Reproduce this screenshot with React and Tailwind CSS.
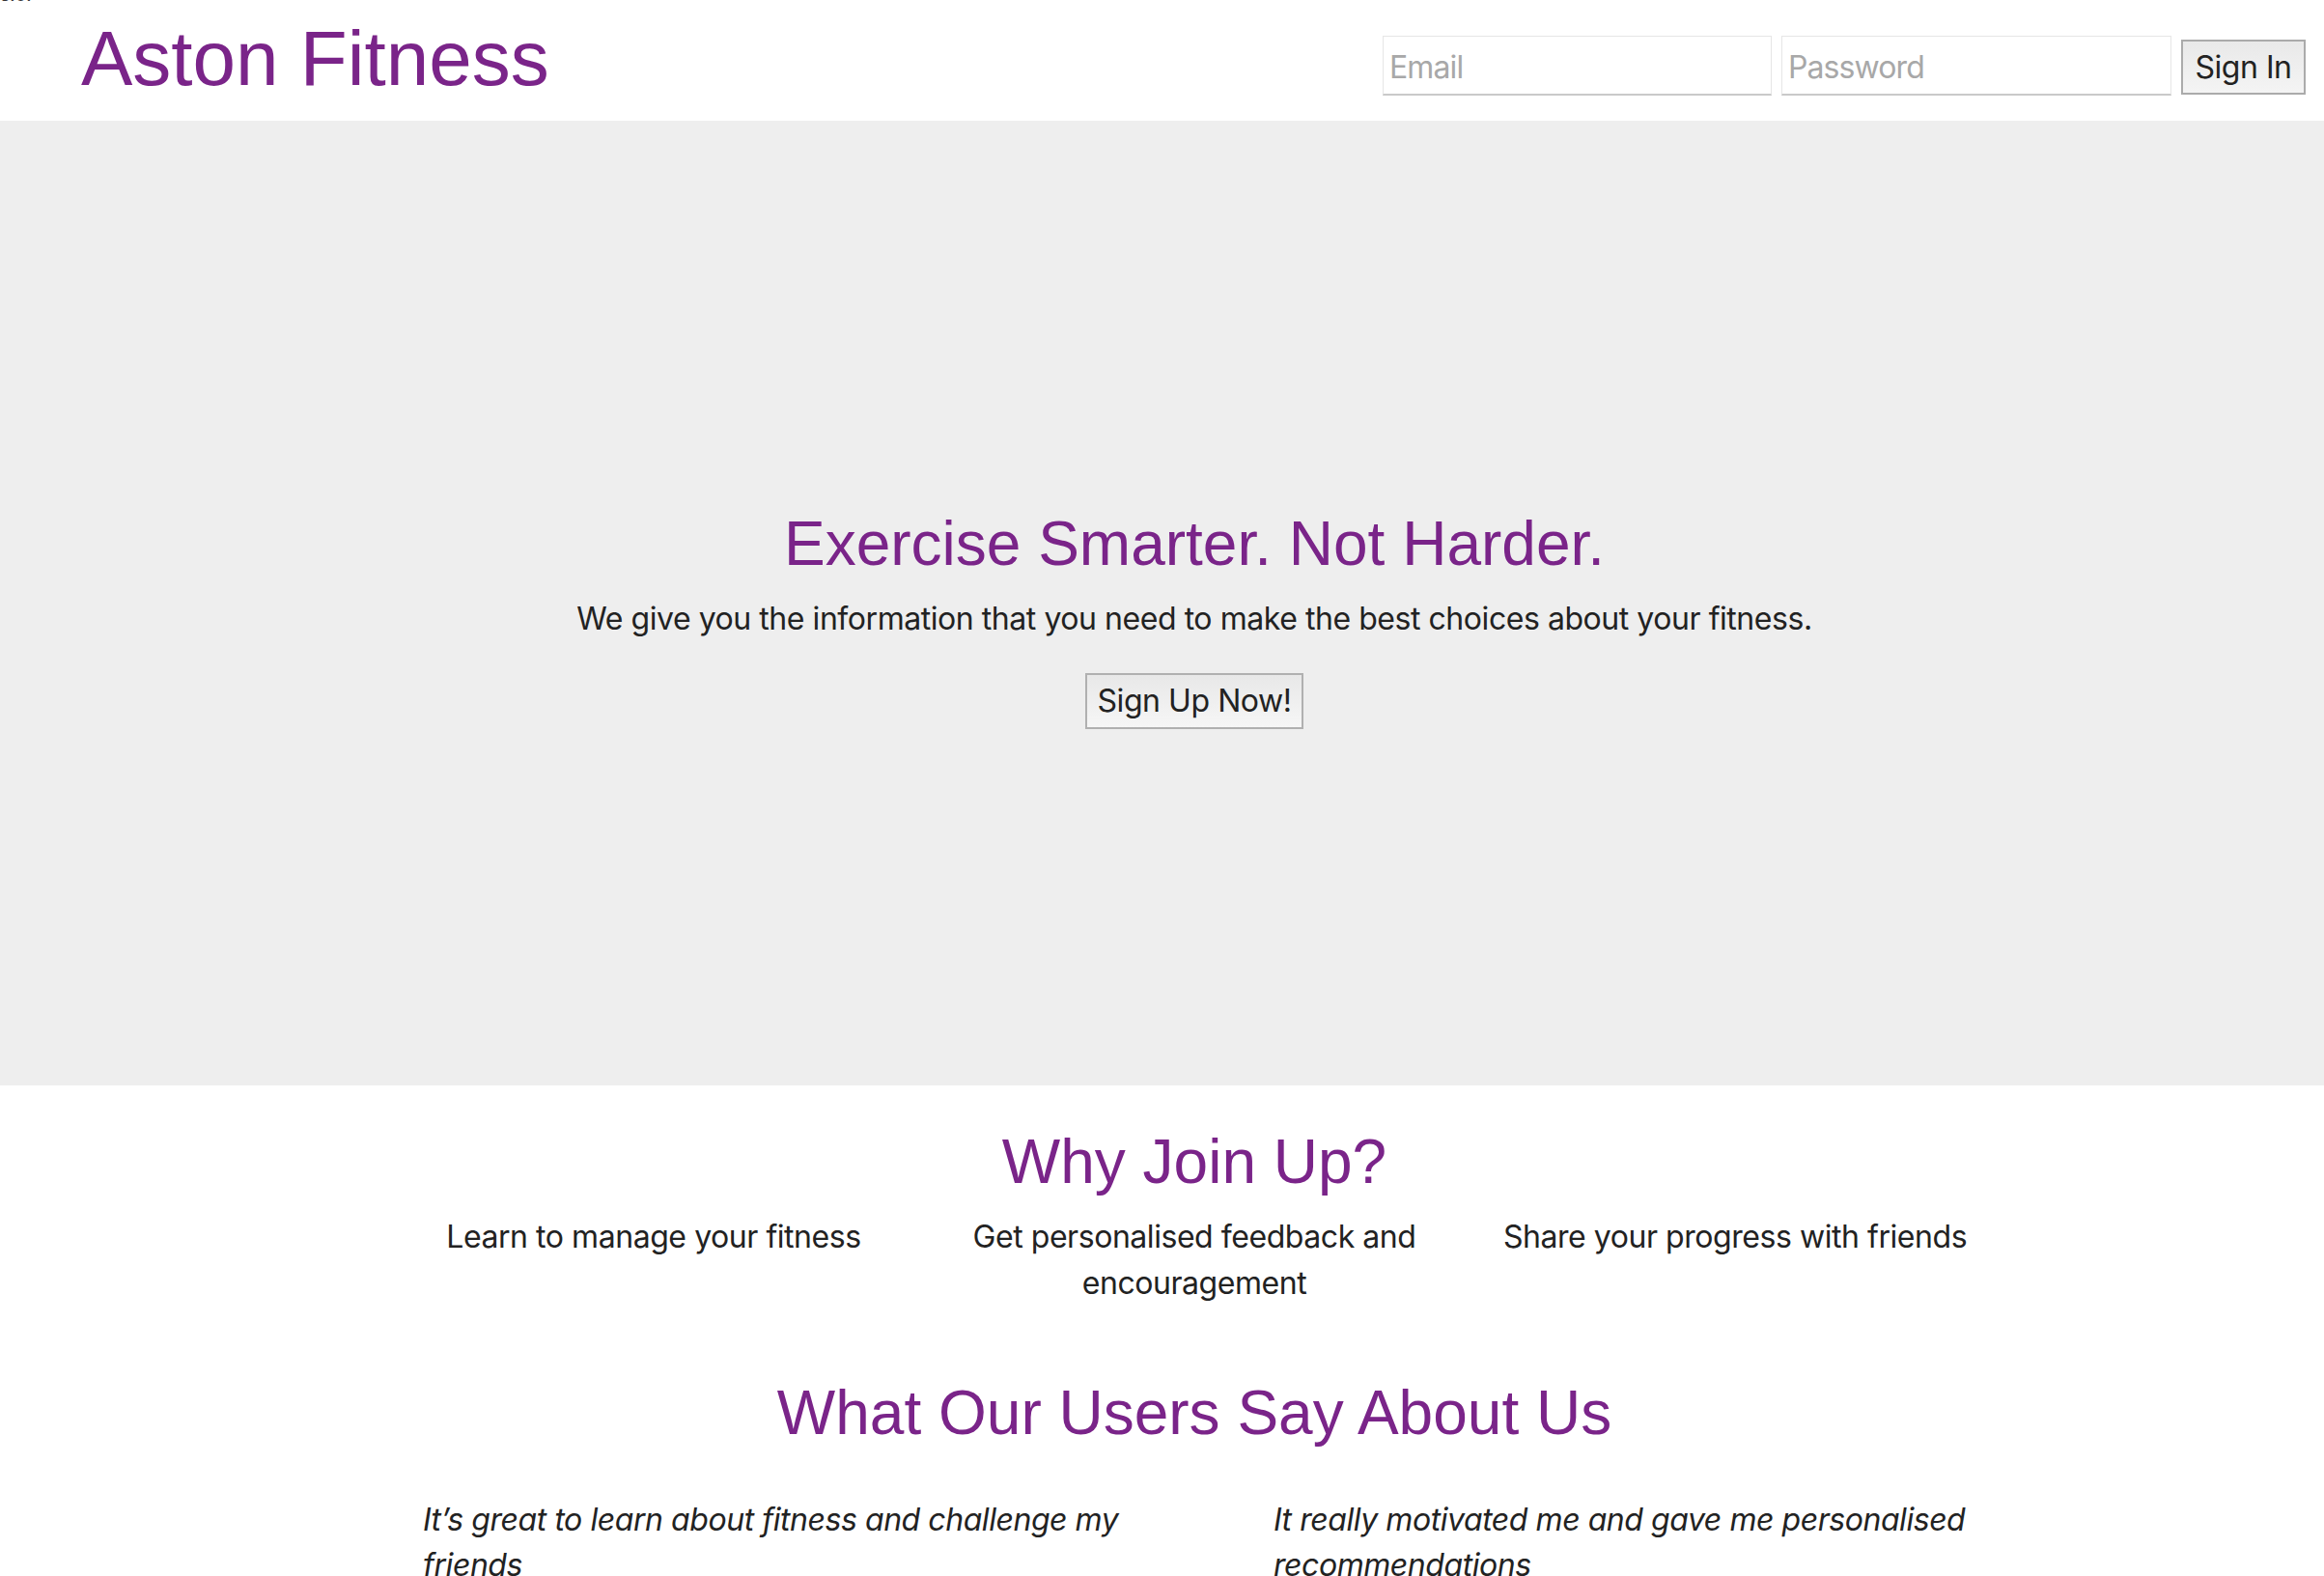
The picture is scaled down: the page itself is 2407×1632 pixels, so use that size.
const purple = "text-[#7a2489]";

const features = [
  "Learn to manage your fitness",
  "Get personalised feedback and encouragement",
  "Share your progress with friends",
];

export default function App() {
  return (
    <div className="relative min-h-screen bg-white text-[#222] font-['Inter',sans-serif] tracking-[-0.028em] overflow-hidden">
      <span className="absolute left-0 -top-[16px] text-[20px] leading-none text-[#333]">s.o.</span>

      <header className="flex justify-between items-start h-[125px]">
        <h1 className={`mt-[21px] pl-[84px] text-[80px] leading-none tracking-normal font-['Liberation_Sans',Arial,sans-serif] ${purple}`}>
          Aston Fitness
        </h1>
        <form className="flex items-start gap-[10px] mt-[37px] mr-[19px]" onSubmit={(e) => e.preventDefault()}>
          <input
            type="email"
            placeholder="Email"
            className="w-[403px] h-[62px] px-[6px] pt-[3px] text-[32px] tracking-[-0.028em] border border-[#e6e6e6] border-b-2 border-b-[#c9c9c9] bg-white placeholder:text-[#a8a8a8] outline-none"
          />
          <input
            type="password"
            placeholder="Password"
            className="w-[404px] h-[62px] px-[6px] pt-[3px] text-[32px] tracking-[-0.028em] border border-[#e6e6e6] border-b-2 border-b-[#c9c9c9] bg-white placeholder:text-[#a8a8a8] outline-none"
          />
          <button className="mt-[4px] w-[129px] h-[57px] text-[32px] text-[#222] border-2 border-[#ababab] bg-gradient-to-b from-[#e9e9e9] to-[#f4f4f4]">
            Sign In
          </button>
        </form>
      </header>

      <section className="bg-[#eeeeee] pl-[67px] pt-[406px] pb-[369px] flex flex-col items-center text-center">
        <h2 className={`text-[64px] leading-none tracking-normal font-['Liberation_Sans',Arial,sans-serif] ${purple}`}>
          Exercise Smarter. Not Harder.
        </h2>
        <p className="mt-[22px] text-[32px] leading-[48px]">
          We give you the information that you need to make the best choices about your fitness.
        </p>
        <button className="mt-[32px] w-[226px] h-[58px] text-[32px] text-[#222] border-2 border-[#b0b0b0] bg-gradient-to-b from-[#e8e8e8] to-[#f6f6f6]">
          Sign Up Now!
        </button>
      </section>

      <section className="pl-[67px] pt-[47px] flex flex-col items-center text-center">
        <h2 className={`text-[64px] leading-none tracking-normal font-['Liberation_Sans',Arial,sans-serif] ${purple}`}>
          Why Join Up?
        </h2>
        <div className="mt-[22px] w-[1680px] grid grid-cols-3">
          {features.map((f) => (
            <p key={f} className="px-[30px] text-[32px] leading-[48px]">
              {f}
            </p>
          ))}
        </div>
      </section>

      <section className="pl-[67px] pt-[78px] flex flex-col items-center">
        <h2 className={`text-[64px] leading-none tracking-normal font-['Liberation_Sans',Arial,sans-serif] ${purple}`}>
          What Our Users Say About Us
        </h2>
        <div className="mt-[55px] w-[1680px] flex pb-[80px]">
          <p className="ml-[41px] w-[735px] text-[32px] leading-[47px] italic">
            It’s great to learn about fitness and challenge my friends
          </p>
          <p className="ml-[146px] w-[735px] text-[32px] leading-[47px] italic">
            It really motivated me and gave me personalised recommendations
          </p>
        </div>
      </section>
    </div>
  );
}
